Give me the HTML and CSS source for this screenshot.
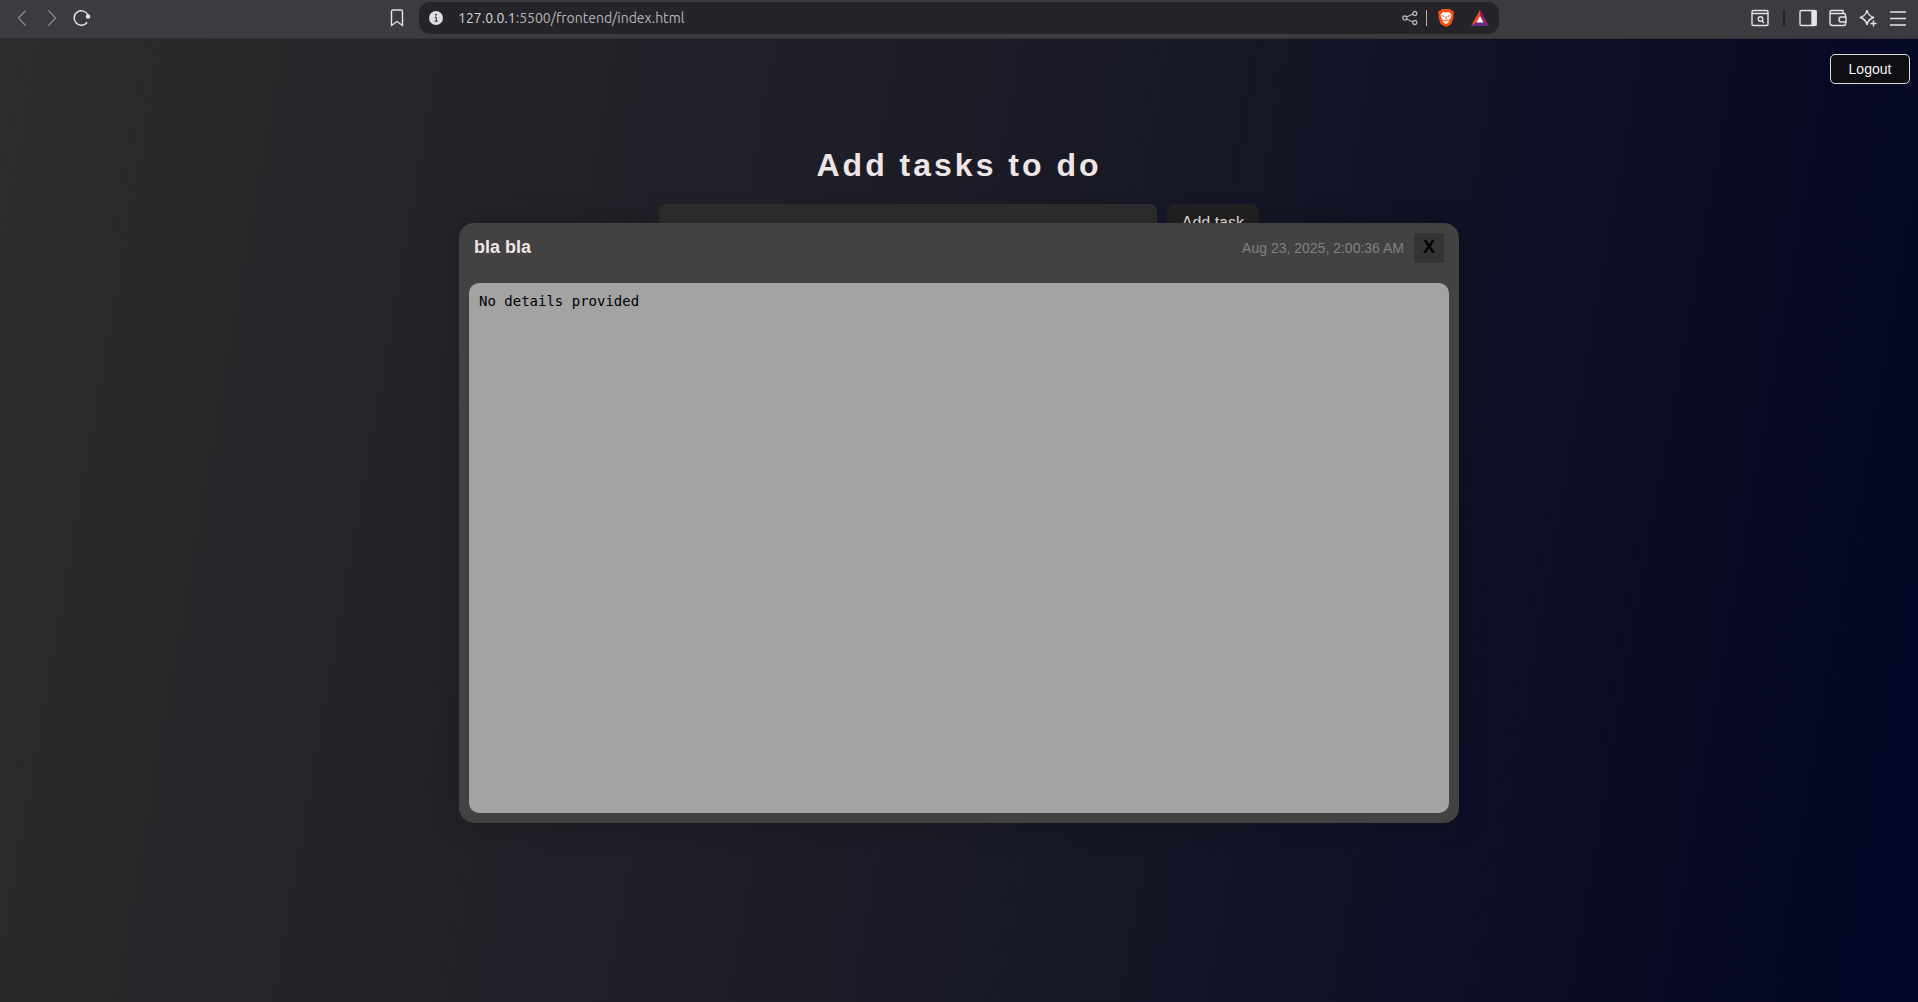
FILE: index.html
```html
<!DOCTYPE html>
<html lang="en">
<head>
<meta charset="utf-8">
<title>Tasks</title>
<link rel="stylesheet" href="styles.css">
</head>
<body>
<header class="toolbar">
  <div class="nav">
    <button class="icon-btn dim" aria-label="Back"><svg width="20" height="20" viewBox="0 0 20 20"><path d="M13.500 2.500 6.500 10 13.500 17.500"/></svg></button>
    <button class="icon-btn dim" aria-label="Forward"><svg width="20" height="20" viewBox="0 0 20 20"><path d="M6.500 2.500 13.500 10 6.500 17.500"/></svg></button>
    <button class="icon-btn" aria-label="Reload"><svg width="20" height="20" viewBox="0 0 20 20"><path d="M15.200 14.200A7.200 7.200 0 1 1 16 7.200" stroke-width="1.500"/><circle class="solid" cx="16" cy="8.500" r="1.600"/></svg></button>
    <button class="icon-btn bookmark" aria-label="Bookmark"><svg width="20" height="20" viewBox="0 0 20 20"><path d="M4.500 3.500q0-1.500 1.500-1.500h8q1.500 0 1.500 1.500V17.500L10 13.500 4.500 17.500z"/></svg></button>
  </div>
  <div class="address">
    <svg class="info" width="14" height="14" viewBox="0 0 14 14"><circle cx="7" cy="7" r="7" fill="#dddde2"/><path d="M5.800 6.200h1.500v4M5.500 10.200h3.200" stroke="#27262b" fill="none"/><circle cx="7" cy="3.700" r=".9" fill="#27262b"/></svg>
    <span class="url"><span class="host">127.0.0.1</span>:5500/frontend/index.html</span>
    <svg class="share" width="16" height="16" viewBox="0 0 16 16"><path d="m4.500 7 6.500-3M4.500 9l6.500 3"/><circle cx="2.800" cy="8" r="2"/><circle cx="12.800" cy="3.500" r="2"/><circle cx="12.800" cy="12.500" r="2"/></svg>
    <span class="divider"></span>
    <svg class="brave" width="16" height="18" viewBox="0 0 16 18"><path fill="#fb4f14" d="M4 0h8l1.500 1.700 1.500-.2 1 2.500-.7 2 .3 1.500-1.800 6.500-1.500 1.800L8 18l-4.300-2.200L2.200 14 .4 7.500.7 6 0 4l1-2.500 1.500.2z"/><path fill="#fff" d="M5 3l3 .5L11 3l2.500 3-1.300 4-2 1.500.8 1.500L8 15l-3-2 .8-1.500-2-1.500-1.300-4z"/><path fill="none" stroke="#fb4f14" d="m3.800 6.500 2.700 1M12.200 6.500l-2.700 1M8 7.500v3M5.800 10.800 8 12l2.200-1.200"/></svg>
    <svg class="bat" width="18" height="16" viewBox="0 0 18 16"><path fill="#ff4724" d="M9 0 0 16l5.500-3.500L9 6z"/><path fill="#9e1f63" d="m9 0 9 16-5.500-3.500L9 6z"/><path fill="#662d91" d="M0 16h18l-5.500-3.500h-7z"/><path fill="#fff" d="m9 6 3.500 6.500h-7z"/></svg>
  </div>
  <div class="tools">
    <button class="icon-btn" aria-label="Search tabs"><svg width="20" height="20" viewBox="0 0 20 20"><rect x="2" y="2.500" width="16" height="15" rx="1.500"/><path d="M2 5.500h16m-6 7.500 2 2"/><circle cx="10.500" cy="11" r="2.300"/></svg></button>
    <span class="tool-divider"></span>
    <button class="icon-btn" aria-label="Sidebar"><svg width="20" height="20" viewBox="0 0 20 20"><rect x="2" y="2.500" width="16" height="15" rx="1.500"/><path class="solid" d="M14 3h4v14h-4z"/></svg></button>
    <button class="icon-btn" aria-label="Wallet"><svg width="20" height="20" viewBox="0 0 20 20"><path d="M17.500 9V7q0-1.500-1.500-1.500H2V15q0 2.500 2.500 2.500H16q1.500 0 1.500-1.500v-2M2 5.500V4q0-1.500 1.500-1.500H15V5.500M18 9h-5q-2 0-2 2.500t2 2.500h5z"/></svg></button>
    <button class="icon-btn" aria-label="Assistant"><svg width="20" height="20" viewBox="0 0 20 20"><path d="M9 2q1 6 7 7.500Q10 11 9 17 8 11 2 9.500 8 8 9 2zm6.500 10.500v6m-3-3h6"/></svg></button>
    <button class="icon-btn" aria-label="Menu"><svg width="20" height="20" viewBox="0 0 20 20"><path d="M2 4h16M2 10.500h16M2 17h16" stroke-width="1.600"/></svg></button>
  </div>
</header>
<main class="page">
  <div class="account"><button class="logout">Logout</button></div>
  <h1 class="title">Add tasks to do</h1>
  <form class="task-form">
    <input class="task-input" type="text" aria-label="Task">
    <button class="add" type="button">Add task</button>
  </form>
  <section class="modal" role="dialog" aria-labelledby="task-name">
    <div class="modal-head">
      <h2 class="task-name" id="task-name">bla bla</h2>
      <time class="date">Aug 23, 2025, 2:00:36 AM</time>
      <button class="close" aria-label="Close">X</button>
    </div>
    <textarea class="details" aria-label="Details" readonly>No details provided</textarea>
  </section>
</main>
</body>
</html>
```
FILE: styles.css
```css
* { box-sizing: border-box; }

body {
  margin: 0;
  min-height: 100vh;
  display: flex;
  flex-direction: column;
  font-family: "Liberation Sans", Arial, sans-serif;
}

button, input, textarea { font-family: inherit; margin: 0; }

.toolbar {
  height: 39px;
  display: grid;
  grid-template-columns: 1fr minmax(0, 1080px) 1fr;
  align-items: center;
  padding-bottom: 3px;
  border-bottom: 1px solid #323136;
  background: #3c3b40;
}

.nav, .tools, .address { display: flex; align-items: center; }
.nav { gap: 10px; padding: 0 12px; }
.bookmark { margin-left: auto; }
.tools { justify-content: flex-end; gap: 10px; padding-right: 10px; }

.icon-btn {
  display: flex;
  padding: 0;
  border: 0;
  background: none;
  color: #e4e4e8;
}
.icon-btn svg, .share {
  fill: none;
  stroke: currentColor;
  stroke-width: 1.4;
}
.icon-btn .solid { fill: currentColor; }
.dim { color: #85848a; }

.address {
  height: 32px;
  padding: 0 10px;
  border-radius: 11px;
  background: #252429;
}
.url {
  flex: 1;
  margin-left: 15px;
  font: 14px/20px Ubuntu, "Noto Sans", sans-serif;
  color: #b5b4b9;
}
.host { color: #d4d4d8; }
.share { color: #b5b4b9; stroke-width: 1.3; }
.divider { width: 1px; height: 16px; margin: 0 11px 0 8px; background: #b5b4b9; }
.bat { margin-left: 17px; }
.tool-divider { width: 2px; height: 16px; margin: 0 3px; background: #242428; }

.page {
  position: relative;
  flex: 1;
  background: linear-gradient(100deg, #2c2c2c, #1a1b26 50%, #020524);
}
.account { display: flex; justify-content: flex-end; padding: 15px 8px 0; }
.logout {
  width: 80px;
  height: 30px;
  border: 1px solid #dddddd;
  border-radius: 5px;
  background: #0e0e13;
  color: #f5f5f5;
  font-size: 14px;
}
.title {
  margin: 62px 0 0;
  text-align: center;
  font-size: 32px;
  line-height: 38px;
  letter-spacing: 3px;
  color: #efe5e5;
}
.task-form {
  display: flex;
  gap: 10px;
  width: 600px;
  max-width: 100%;
  margin: 20px auto 0;
}
.task-input, .add {
  height: 38px;
  border: 0;
  border-radius: 8px;
  font-size: 16px;
}
.task-input { flex: 1; min-width: 0; background: #2d2d2d; }
.add { padding: 0 15px; background: #212121; color: #efe5e5; }

.modal {
  position: absolute;
  top: 184px;
  left: 50%;
  transform: translateX(-50%);
  display: flex;
  flex-direction: column;
  width: 1000px;
  max-width: 100%;
  height: 600px;
  padding: 10px;
  border-radius: 15px;
  background: #424242;
  box-shadow: 0 0 30px rgba(0, 0, 0, 0.2);
}
.modal-head {
  display: flex;
  align-items: flex-start;
  height: 50px;
  padding: 0 5px;
}
.task-name { flex: 1; margin: 4px 0 0; font-size: 18px; line-height: 20px; color: #efe5e5; }
.date { margin: 7px 10px 0; font-size: 14px; line-height: 16px; color: #808080; }
.close {
  width: 30px;
  height: 30px;
  padding: 0 0 2px;
  border: 0;
  border-radius: 2px;
  background: #353535;
  color: #000000;
  font-size: 18px;
  font-weight: bold;
}
.details {
  flex: 1;
  padding: 10px;
  border: 0;
  border-radius: 10px;
  background: #a3a3a3;
  color: #000000;
  resize: none;
  font: 14px/17px "DejaVu Sans Mono", monospace;
}
```
